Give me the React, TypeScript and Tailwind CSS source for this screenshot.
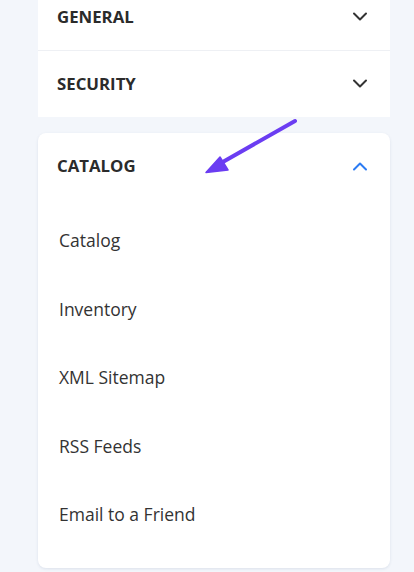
import React from "react";

const Chevron = ({ up = false, color = "#333" }: { up?: boolean; color?: string }) => (
  <svg width="16" height="10" viewBox="0 0 16 10" fill="none">
    {up ? (
      <path d="M2 8.5L8 2.5L14 8.5" stroke={color} strokeWidth="2" strokeLinecap="round" strokeLinejoin="round" />
    ) : (
      <path d="M2 1.5L8 7.5L14 1.5" stroke={color} strokeWidth="2" strokeLinecap="round" strokeLinejoin="round" />
    )}
  </svg>
);

const items = ["Catalog", "Inventory", "XML Sitemap", "RSS Feeds", "Email to a Friend"];

export default function App() {
  return (
    <div
      className="relative w-[414px] h-[572px] overflow-hidden bg-[#f3f6fb]"
      style={{ fontFamily: '"Open Sans", sans-serif' }}
    >
      <div className="-mt-[16px] ml-[38px] w-[352px] flex flex-col">
        <div className="bg-white">
          <div className="h-[67px] flex items-center justify-between pl-[19px] pr-[22px] border-b border-[#eef0f4]">
            <span className="text-[16.8px] font-bold text-[#2b2b2b]">GENERAL</span>
            <Chevron />
          </div>
          <div className="h-[66px] flex items-center justify-between pl-[19px] pr-[22px]">
            <span className="text-[16.8px] font-bold text-[#2b2b2b]">SECURITY</span>
            <Chevron />
          </div>
        </div>
        <div className="mt-[16px] bg-white rounded-[8px] shadow-[0_1px_3px_rgba(60,80,120,0.12)] pb-[19px]">
          <div className="h-[66px] flex items-center justify-between pl-[19px] pr-[22px]">
            <span className="text-[16.8px] font-bold text-[#2b2b2b]">CATALOG</span>
            <Chevron up color="#2b7bf3" />
          </div>
          <div className="pt-[7px] flex flex-col">
            {items.map((t) => (
              <div key={t} className="h-[68.5px] flex items-center pl-[21px] text-[17.5px] text-[#333]">
                {t}
              </div>
            ))}
          </div>
        </div>
      </div>
      <svg className="absolute left-0 top-0" width="414" height="572" viewBox="0 0 414 572" fill="none">
        <path d="M295 121L214 167" stroke="#6b3df2" strokeWidth="4" strokeLinecap="round" />
        <path d="M206 172.5L220 157L228 170Z" fill="#6b3df2" stroke="#6b3df2" strokeWidth="1.5" strokeLinejoin="round" />
      </svg>
    </div>
  );
}
